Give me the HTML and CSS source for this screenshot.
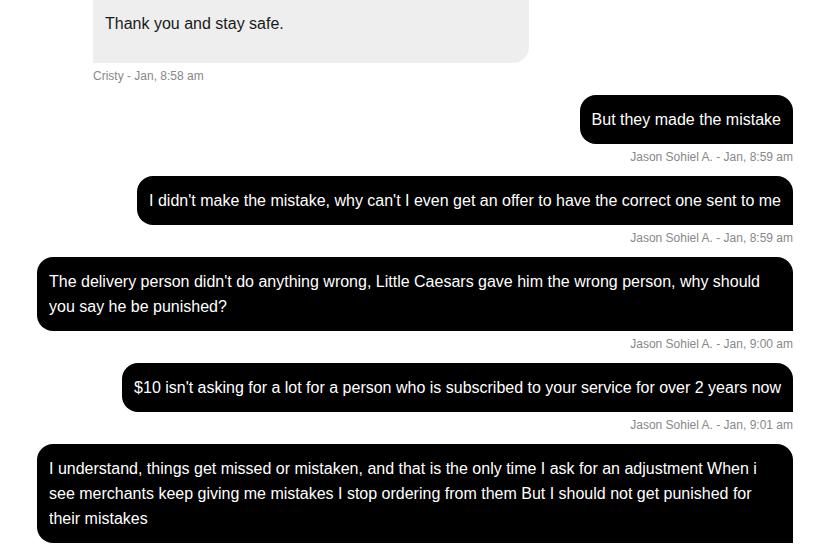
FILE: index.html
```html
<!DOCTYPE html>
<html lang="en">
<head>
<meta charset="utf-8">
<title>Conversation</title>
<link rel="stylesheet" href="styles.css">
</head>
<body>
<main class="thread">
  <div class="msg msg-in">
    <div class="bubble bubble-in">Thank you and stay safe.</div>
    <div class="meta">Cristy - Jan, 8:58 am</div>
  </div>
  <div class="msg msg-out">
    <div class="bubble bubble-out">But they made the mistake</div>
    <div class="meta">Jason Sohiel A. - Jan, 8:59 am</div>
  </div>
  <div class="msg msg-out">
    <div class="bubble bubble-out">I didn't make the mistake, why can't I even get an offer to have the correct one sent to me</div>
    <div class="meta">Jason Sohiel A. - Jan, 8:59 am</div>
  </div>
  <div class="msg msg-out">
    <div class="bubble bubble-out">The delivery person didn't do anything wrong, Little Caesars gave him the wrong person, why should you say he be punished?</div>
    <div class="meta">Jason Sohiel A. - Jan, 9:00 am</div>
  </div>
  <div class="msg msg-out">
    <div class="bubble bubble-out">$10 isn't asking for a lot for a person who is subscribed to your service for over 2 years now</div>
    <div class="meta">Jason Sohiel A. - Jan, 9:01 am</div>
  </div>
  <div class="msg msg-out">
    <div class="bubble bubble-out">I understand, things get missed or mistaken, and that is the only time I ask for an adjustment When i see merchants keep giving me mistakes I stop ordering from them But I should not get punished for their mistakes</div>
  </div>
</main>
</body>
</html>
```

FILE: styles.css
```css
* { box-sizing: border-box; }

html, body {
  margin: 0;
  padding: 0;
  background: #ffffff;
  overflow: hidden;
}

body {
  font-family: "Liberation Sans", Arial, sans-serif;
  width: 815px;
  height: 548px;
}

.thread {
  display: flex;
  flex-direction: column;
  padding: 0 22px 0 37px;
  margin-top: -20px;
}

.msg {
  display: flex;
  flex-direction: column;
  margin-bottom: 12px;
}

.msg-in {
  align-items: flex-start;
  padding-left: 56px;
}

.msg-out {
  align-items: flex-end;
}

.bubble {
  font-size: 16px;
  line-height: 25px;
  padding: 12px;
}

.bubble-in {
  width: 436px;
  background: #eeeeee;
  color: #1a1a1a;
  padding: 31px 12px 27px;
  border-radius: 16px 16px 16px 0;
}

.bubble-out {
  max-width: 756px;
  background: #000000;
  color: #ffffff;
  border-radius: 16px 16px 0 16px;
}

.meta {
  margin-top: 6px;
  font-size: 12px;
  line-height: 14px;
  color: #888888;
}
```
